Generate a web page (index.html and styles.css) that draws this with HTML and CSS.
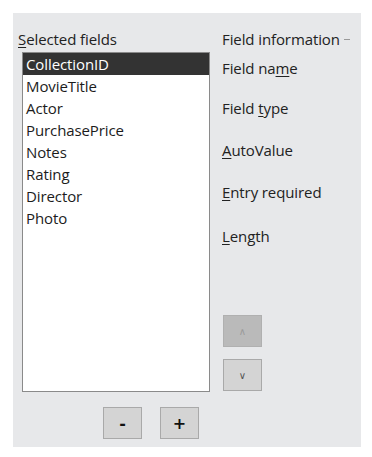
FILE: index.html
```html
<!DOCTYPE html>
<html lang="en">
<head>
  <meta charset="UTF-8" />
  <title>Field information</title>
  <link rel="stylesheet" href="styles.css">
</head>
<body>
<div class="panel">
  <div class="left">
    <div class="caption"><u>S</u>elected fields</div>
    <ul class="listbox">
      <li class="selected">CollectionID</li>
      <li>MovieTitle</li>
      <li>Actor</li>
      <li>PurchasePrice</li>
      <li>Notes</li>
      <li>Rating</li>
      <li>Director</li>
      <li>Photo</li>
    </ul>
    <div class="addremove">
      <button class="btn">-</button>
      <button class="btn">+</button>
    </div>
  </div>
  <div class="right">
    <div class="caption legend">Field information <span class="rule"></span></div>
    <div class="prop first">Field na<u>m</u>e</div>
    <div class="prop">Field <u>t</u>ype</div>
    <div class="prop"><u>A</u>utoValue</div>
    <div class="prop"><u>E</u>ntry required</div>
    <div class="prop"><u>L</u>ength</div>
    <div class="arrows">
      <button class="btn arrow disabled">&#x2227;</button>
      <button class="btn arrow">&#x2228;</button>
    </div>
  </div>
</div>
</body>
</html>
```

FILE: styles.css
```css
/* Reset */
* { margin: 0; padding: 0; box-sizing: border-box; }
html, body { background: #fff; font-family: 'Open Sans', 'Noto Sans', sans-serif; color: #222; }

/* Dialog panel */
.panel {
  margin: 13px 0 0 13px; width: 348px; height: 434px;
  background: #e7e8ea; display: flex; padding-top: 16px;
}
.caption { font-size: 15px; line-height: 20px; height: 20px; white-space: nowrap; letter-spacing: -0.1px; }
u { text-decoration-thickness: 1px; text-underline-offset: 2px; }

/* Left column */
.left { width: 197px; padding-left: 5px; }
.left .caption { margin-bottom: 3px; }
.listbox {
  list-style: none; margin-left: 4px; width: 188px; height: 340px;
  background: #fff; border: 1px solid #8a8a8a;
}
.listbox li { font-size: 15px; line-height: 22px; height: 22px; padding-left: 3px; color: #1c1c1c; letter-spacing: -0.1px; }
.listbox li.selected { background: #333; color: #fff; }

.addremove { display: flex; gap: 18px; margin: 15px 0 0 85px; }

/* Buttons */
.btn {
  width: 39px; height: 32px; background: #d4d4d4; border: 1px solid #a9a9a9;
  font-family: 'DejaVu Sans', sans-serif; font-size: 16px; font-weight: 700; color: #111;
}

/* Right column */
.right { padding-left: 12px; flex: 1; }
.legend { display: flex; align-items: center; }
.rule { display: inline-block; width: 6px; height: 1px; background: #999; margin-left: 4px; }
.prop { font-size: 15px; line-height: 20px; height: 20px; margin-top: 22px; letter-spacing: -0.1px; }
.prop.first { margin-top: 9px; }
.prop:nth-child(3) { margin-top: 20px; }
.prop:nth-child(6) { margin-top: 24px; }
.arrows { display: flex; flex-direction: column; gap: 12px; margin-top: 69px; margin-left: 1px; }
.arrow { font-size: 10px; font-weight: 400; color: #555; }
.arrow.disabled { background: #bababa; border-color: #b0b0b0; color: #9a9a9a; }
```
